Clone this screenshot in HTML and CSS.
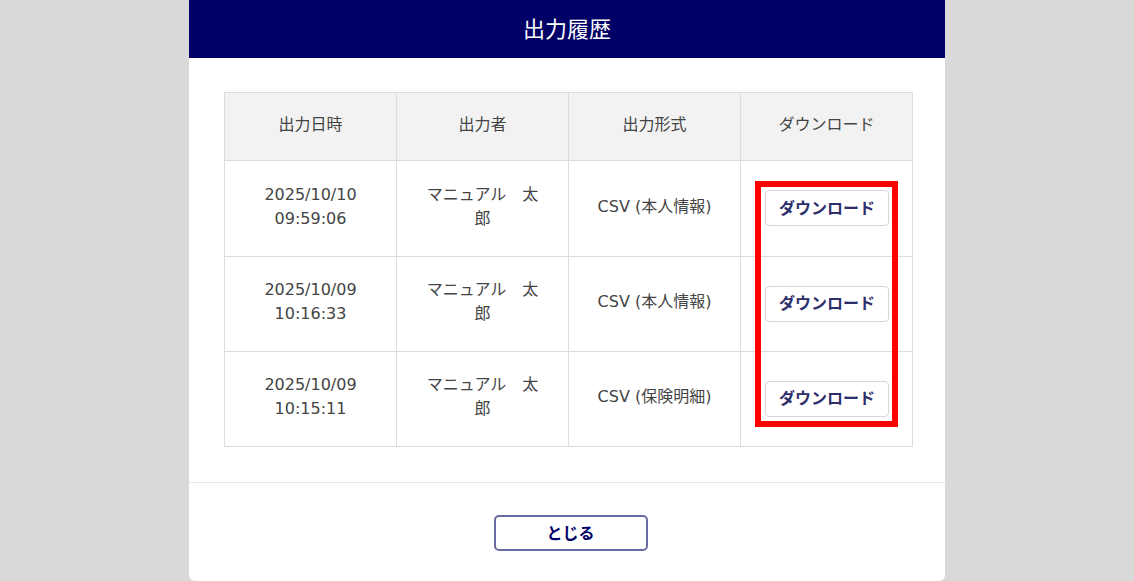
FILE: index.html
```html
<!DOCTYPE html>
<html lang="ja">
<head>
<meta charset="utf-8">
<title>出力履歴</title>
<link rel="stylesheet" href="styles.css">
</head>
<body>
<div class="stage">
  <div class="modal">
    <div class="modal-header">出力履歴</div>
    <div class="modal-body">
      <div class="table-wrap">
        <table class="history">
          <thead>
            <tr>
              <th>出力日時</th>
              <th>出力者</th>
              <th>出力形式</th>
              <th>ダウンロード</th>
            </tr>
          </thead>
          <tbody>
            <tr>
              <td>2025/10/10 09:59:06</td>
              <td>マニュアル　太郎</td>
              <td>CSV (本人情報)</td>
              <td><button class="dl-btn" type="button">ダウンロード</button></td>
            </tr>
            <tr>
              <td>2025/10/09 10:16:33</td>
              <td>マニュアル　太郎</td>
              <td>CSV (本人情報)</td>
              <td><button class="dl-btn" type="button">ダウンロード</button></td>
            </tr>
            <tr>
              <td>2025/10/09 10:15:11</td>
              <td>マニュアル　太郎</td>
              <td>CSV (保険明細)</td>
              <td><button class="dl-btn" type="button">ダウンロード</button></td>
            </tr>
          </tbody>
        </table>
        <div class="highlight"></div>
      </div>
    </div>
    <div class="modal-footer">
      <button class="close-btn" type="button">とじる</button>
    </div>
  </div>
</div>
</body>
</html>
```

FILE: styles.css
```css
* { box-sizing: border-box; }
html, body {
  margin: 0;
  padding: 0;
  height: 100%;
  background: #d9d9d9;
  font-family: "Noto Sans CJK JP", "Noto Sans", sans-serif;
  color: #444;
}
.stage {
  display: flex;
  justify-content: center;
  height: 581px;
  overflow: hidden;
}
.modal {
  width: 756px;
  height: 581px;
  background: #fff;
  border-radius: 0 0 6px 6px;
  display: flex;
  flex-direction: column;
}
.modal-header {
  height: 58px;
  background: #000066;
  color: #fff;
  font-size: 22px;
  display: flex;
  align-items: center;
  justify-content: center;
  padding-bottom: 5px;
}
.modal-body {
  padding: 34px 32px 35px 35px;
  border-bottom: 1px solid #e6e6e6;
}
.table-wrap {
  position: relative;
}
.history {
  width: 689px;
  border-collapse: collapse;
  table-layout: fixed;
  font-family: "DejaVu Sans", "Noto Sans CJK JP", sans-serif;
  font-size: 16px;
  line-height: 24px;
}
.history th,
.history td {
  border: 1px solid #dcdcdc;
  text-align: center;
  vertical-align: middle;
  padding: 0 24px 4px;
  color: #444;
}
.history th {
  height: 68px;
  background: #f2f2f2;
  font-weight: normal;
}
.history td {
  height: 95px;
}
.history tbody tr:first-child td {
  height: 96px;
}
.dl-btn {
  width: 124px;
  height: 36px;
  background: #fff;
  border: 1px solid #d6d6d6;
  border-radius: 4px;
  font-family: "Noto Sans CJK JP", sans-serif;
  font-size: 16px;
  font-weight: bold;
  color: #2e2e6b;
  padding: 0 0 3px;
  margin-top: 3px;
}
.highlight {
  position: absolute;
  left: 531px;
  top: 89px;
  width: 143px;
  height: 246px;
  border: 6px solid #ff0000;
  pointer-events: none;
}
.modal-footer {
  display: flex;
  justify-content: center;
  padding-top: 32px;
  padding-left: 7px;
}
.close-btn {
  width: 154px;
  height: 36px;
  background: #fff;
  border: 2px solid #6a6aa3;
  border-radius: 5px;
  font-family: inherit;
  font-size: 16px;
  font-weight: bold;
  color: #000066;
  padding: 0 0 3px;
}
```
